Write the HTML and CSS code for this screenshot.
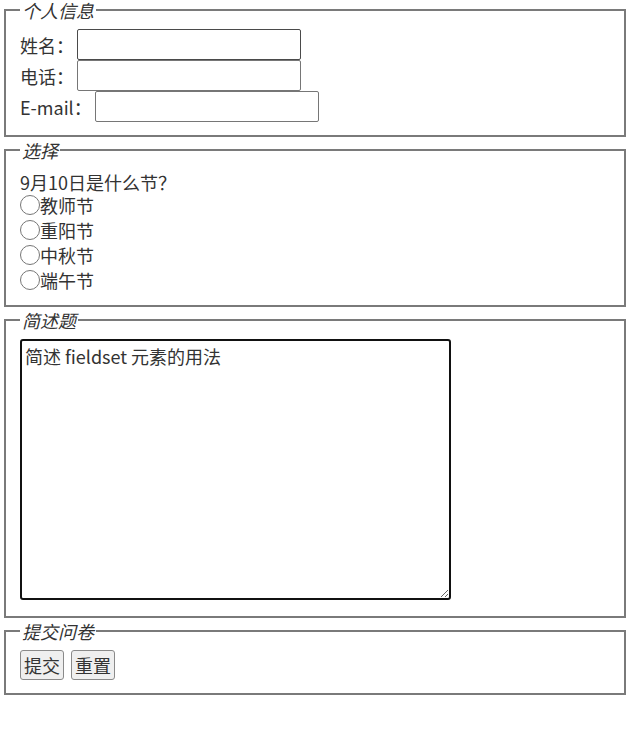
FILE: index.html
```html
<!DOCTYPE html>
<html lang="zh-CN">
<head>
    <meta charset="UTF-8">
    <meta name="viewport" content="width=device-width, initial-scale=1.0">
    <title>问卷调查</title>
<link rel="stylesheet" href="styles.css">
</head>
<body>
    <form class="survey">
        <fieldset class="group">
            <legend>个人信息</legend>
            <div class="row">
                <label for="name">姓名：</label>
                <input type="text" id="name" class="input">
            </div>
            <div class="row">
                <label for="phone">电话：</label>
                <input type="text" id="phone" class="input">
            </div>
            <div class="row">
                <label for="email">E-mail：</label>
                <input type="text" id="email" class="input">
            </div>
        </fieldset>

        <fieldset class="group">
            <legend>选择</legend>
            <p class="question">9月10日是什么节？</p>
            <label class="option"><input type="radio" name="day">教师节</label>
            <label class="option"><input type="radio" name="day">重阳节</label>
            <label class="option"><input type="radio" name="day">中秋节</label>
            <label class="option"><input type="radio" name="day">端午节</label>
        </fieldset>

        <fieldset class="group">
            <legend>简述题</legend>
            <textarea class="answer">简述 fieldset 元素的用法</textarea>
        </fieldset>

        <fieldset class="group">
            <legend>提交问卷</legend>
            <div class="actions">
                <button type="submit" class="btn">提交</button>
                <button type="reset" class="btn">重置</button>
            </div>
        </fieldset>
    </form>
</body>
</html>
```

FILE: styles.css
```css
* {
    box-sizing: border-box;
}

body {
    margin: 0 2px;
    font-family: "Noto Sans CJK SC", "Noto Sans", sans-serif;
    font-size: 18px;
    color: #333;
    background: #fff;
}

/* Fieldsets */
.group {
    margin: 0 2px 3px;
    padding: 9px 14px 13px;
    border: 2px solid #7a7a7a;
    min-width: 0;
}

.group legend {
    padding: 0 2px;
    font-style: italic;
    line-height: 20px;
    color: #333;
}

/* Personal info rows */
.row {
    display: flex;
    align-items: center;
    gap: 3px;
    height: 31px;
}

.row label {
    line-height: 1;
}

.input {
    width: 224px;
    height: 31px;
    margin: 0;
    padding: 1px 2px;
    border: 1px solid #767676;
    border-radius: 2px;
    font: inherit;
}

#name {
    border-color: #4a4a4a;
}

/* Choice */
.question {
    margin: 3px 0 0;
    line-height: 20px;
}

.option {
    display: flex;
    align-items: center;
    height: 25px;
}

.option input {
    width: 20px;
    height: 20px;
    margin: 0;
}

/* Text area */
.answer {
    display: block;
    width: 431px;
    height: 261px;
    margin: 0 0 3px;
    padding: 2px 3px;
    border: 2px solid #111;
    border-radius: 3px;
    font: inherit;
    color: #333;
    resize: both;
    outline: none;
}

/* Buttons */
.actions {
    display: flex;
    gap: 7px;
}

.btn {
    height: 30px;
    padding: 0 3px;
    border: 1px solid #8a8a8a;
    border-radius: 3px;
    background: #efefef;
    font: inherit;
    color: #333;
}
```
